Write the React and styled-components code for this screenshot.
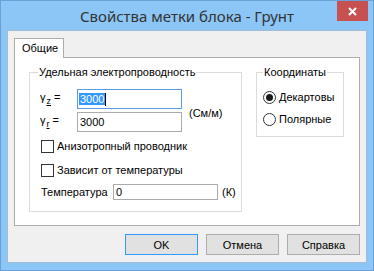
import React from "react";
import styled, { createGlobalStyle } from "styled-components";

const GlobalStyle = createGlobalStyle`
  html, body { margin: 0; padding: 0; background: #ffffff; }
  body {
    font-family: "Liberation Sans", Arial, sans-serif;
    font-size: 11px;
    color: #000;
  }
  * { box-sizing: border-box; }
`;

const Window = styled.div`
  width: 374px;
  height: 271px;
  border: 1px solid #6aa0d6;
  background: #8bc6f6;
  display: flex;
  flex-direction: column;
  padding: 0 6px 7px;
`;

const TitleBar = styled.div`
  height: 29px;
  display: grid;
  grid-template-columns: 1fr auto 1fr;
  align-items: center;
`;

const Title = styled.div`
  grid-column: 2;
  font-family: "Noto Sans", "Open Sans", sans-serif;
  font-size: 15px;
  color: #333;
  white-space: nowrap;
  line-height: 20px;
  padding-top: 1px;
`;

const CloseButton = styled.div`
  grid-column: 3;
  justify-self: end;
  align-self: start;
  width: 31px;
  height: 20px;
  background: #c75050;
  display: flex;
  align-items: center;
  justify-content: center;
  margin-right: -1px;
`;

const Client = styled.div`
  flex: 1;
  border: 1px solid #a3bcd6;
  background: #f0f0f0;
  display: flex;
  flex-direction: column;
  padding: 7px 6px 7px;
`;

const TabStrip = styled.div`
  display: flex;
`;

const Tab = styled.div`
  width: 50px;
  height: 20px;
  border: 1px solid #adadad;
  border-bottom: none;
  background: #fff;
  padding-left: 7px;
  line-height: 18px;
  margin-bottom: -1px;
  position: relative;
  z-index: 1;
`;

const Panel = styled.div`
  height: 169px;
  border: 1px solid #adadad;
  background: #fff;
  display: flex;
  align-items: flex-start;
  gap: 14px;
  padding: 14px 0 0 14px;
`;

const GroupBox = styled.div`
  position: relative;
  border: 1px solid #dcdcdc;
  width: ${(p) => p.$w}px;
  height: ${(p) => p.$h}px;
  padding: ${(p) => p.$pad};
`;

const Caption = styled.span`
  position: absolute;
  top: -8px;
  left: ${(p) => p.$left}px;
  padding: 0 1px;
  background: #fff;
  line-height: 14px;
  white-space: nowrap;
`;

const GammaGrid = styled.div`
  display: grid;
  grid-template-columns: 37px 105px auto;
  grid-template-rows: 20px 20px;
  row-gap: 3px;
`;

const GammaLabel = styled.div`
  align-self: center;
  white-space: nowrap;
  line-height: 14px;
`;

const Sub = styled.span`
  font-size: 9px;
  vertical-align: -3px;
  text-decoration: underline;
  margin-left: 1px;
  margin-right: 3px;
`;

const Field = styled.div`
  height: ${(p) => p.$h}px;
  width: 105px;
  border: 1px solid ${(p) => (p.$focused ? "#569de5" : "#ababab")};
  background: #fff;
  padding-left: 1px;
  display: flex;
  align-items: center;
  line-height: 12px;
`;

const Selected = styled.span`
  background: #3399ff;
  color: #fff;
  line-height: 12px;
  padding: 0 1px 0 1px;
`;

const Caret = styled.span`
  width: 1px;
  height: 13px;
  background: #000;
`;

const Plain = styled.span`
  padding-left: 1px;
`;

const Unit = styled.div`
  grid-column: 3;
  grid-row: 1 / 3;
  align-self: center;
  margin: 4px 0 0 7px;
  white-space: nowrap;
`;

const CheckRow = styled.div`
  display: flex;
  align-items: center;
  gap: 3px;
  height: 13px;
  margin: ${(p) => p.$mt}px 0 0 1px;
  white-space: nowrap;
  line-height: 13px;
`;

const CheckBox = styled.span`
  width: 13px;
  height: 13px;
  border: 1px solid #333;
  background: #fff;
  flex: none;
`;

const TempRow = styled.div`
  display: flex;
  align-items: center;
  height: 16px;
  margin: 7px 0 0 1px;
  white-space: nowrap;
`;

const TempLabel = styled.span`
  width: 72px;
`;

const TempUnit = styled.span`
  margin-left: 4px;
`;

const RadioRow = styled.div`
  display: flex;
  align-items: center;
  gap: 3px;
  height: 13px;
  margin-top: ${(p) => p.$mt}px;
  white-space: nowrap;
  line-height: 13px;
`;

const Radio = styled.span`
  width: 13px;
  height: 13px;
  border-radius: 50%;
  border: 1px solid #333;
  background: #fff;
  display: flex;
  align-items: center;
  justify-content: center;
  flex: none;
  &::after {
    content: "";
    width: 7px;
    height: 7px;
    border-radius: 50%;
    background: #1a1a1a;
    display: ${(p) => (p.$on ? "block" : "none")};
  }
`;

const ButtonRow = styled.div`
  margin-top: 8px;
  display: flex;
  justify-content: flex-end;
  gap: 8px;
`;

const Button = styled.div`
  width: 73px;
  height: 21px;
  border: 1px solid ${(p) => (p.$default ? "#3399ff" : "#adadad")};
  background: #e1e1e1;
  display: flex;
  align-items: center;
  justify-content: center;
  line-height: 14px;
`;

export default function App() {
  return (
    <>
      <GlobalStyle />
      <Window>
        <TitleBar>
          <Title>Свойства метки блока - Грунт</Title>
          <CloseButton>
            <svg width="9" height="9" viewBox="0 0 9 9">
              <path d="M1 1 L8 8 M8 1 L1 8" stroke="#fff" strokeWidth="2" />
            </svg>
          </CloseButton>
        </TitleBar>
        <Client>
          <TabStrip>
            <Tab>Общие</Tab>
          </TabStrip>
          <Panel>
            <GroupBox $w={213} $h={140} $pad="16px 0 0 10px">
              <Caption $left={8}>Удельная электропроводность</Caption>
              <GammaGrid>
                <GammaLabel>
                  γ<Sub>z</Sub>=
                </GammaLabel>
                <Field $h={20} $focused>
                  <Selected>3000</Selected>
                  <Caret />
                </Field>
                <Unit>(См/м)</Unit>
                <GammaLabel>
                  γ<Sub>r</Sub>=
                </GammaLabel>
                <Field $h={20}>
                  <Plain>3000</Plain>
                </Field>
              </GammaGrid>
              <CheckRow $mt={8}>
                <CheckBox />
                Анизотропный проводник
              </CheckRow>
              <CheckRow $mt={11}>
                <CheckBox />
                Зависит от температуры
              </CheckRow>
              <TempRow>
                <TempLabel>Температура</TempLabel>
                <Field $h={16}>
                  <Plain>0</Plain>
                </Field>
                <TempUnit>(К)</TempUnit>
              </TempRow>
            </GroupBox>
            <GroupBox $w={88} $h={65} $pad="18px 0 0 6px">
              <Caption $left={6}>Координаты</Caption>
              <RadioRow $mt={0}>
                <Radio $on />
                Декартовы
              </RadioRow>
              <RadioRow $mt={9}>
                <Radio />
                Полярные
              </RadioRow>
            </GroupBox>
          </Panel>
          <ButtonRow>
            <Button $default>OK</Button>
            <Button>Отмена</Button>
            <Button>Справка</Button>
          </ButtonRow>
        </Client>
      </Window>
    </>
  );
}
